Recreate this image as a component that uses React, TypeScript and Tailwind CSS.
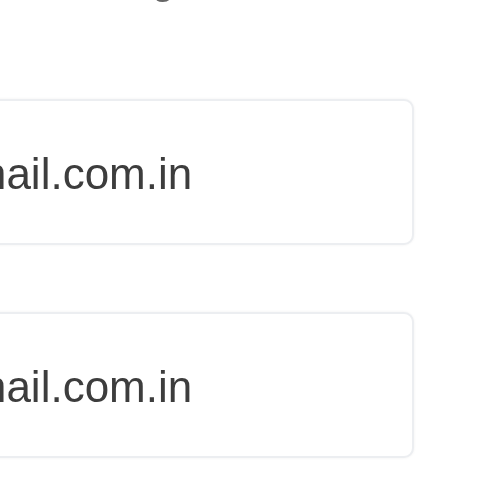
export default function App() {
  const font = { fontFamily: '"Liberation Sans", Arial, sans-serif' };
  return (
    <div className="w-[480px] h-[480px] bg-white overflow-hidden relative" style={font}>
      <div className="h-[8px] overflow-hidden relative">
        <div className="absolute left-[152px] top-[-40px] text-[40px] leading-[40px] text-[#666] blur-[0.6px]">g</div>
      </div>
      <div className="flex flex-col gap-[67px] mt-[91px] ml-[-300px] w-[714px]">
        {[0, 1].map((i) => (
          <div
            key={i}
            className="h-[146px] rounded-[10px] border-2 border-[#eceef1] bg-white shadow-[0_0_3px_rgba(0,0,0,0.06)] flex items-center pl-[113px]"
          >
            <span className="text-[44px] leading-[50px] pt-[4px] text-[#3d3d3d] blur-[0.4px]">user@gmail.com.in</span>
          </div>
        ))}
      </div>
    </div>
  );
}
